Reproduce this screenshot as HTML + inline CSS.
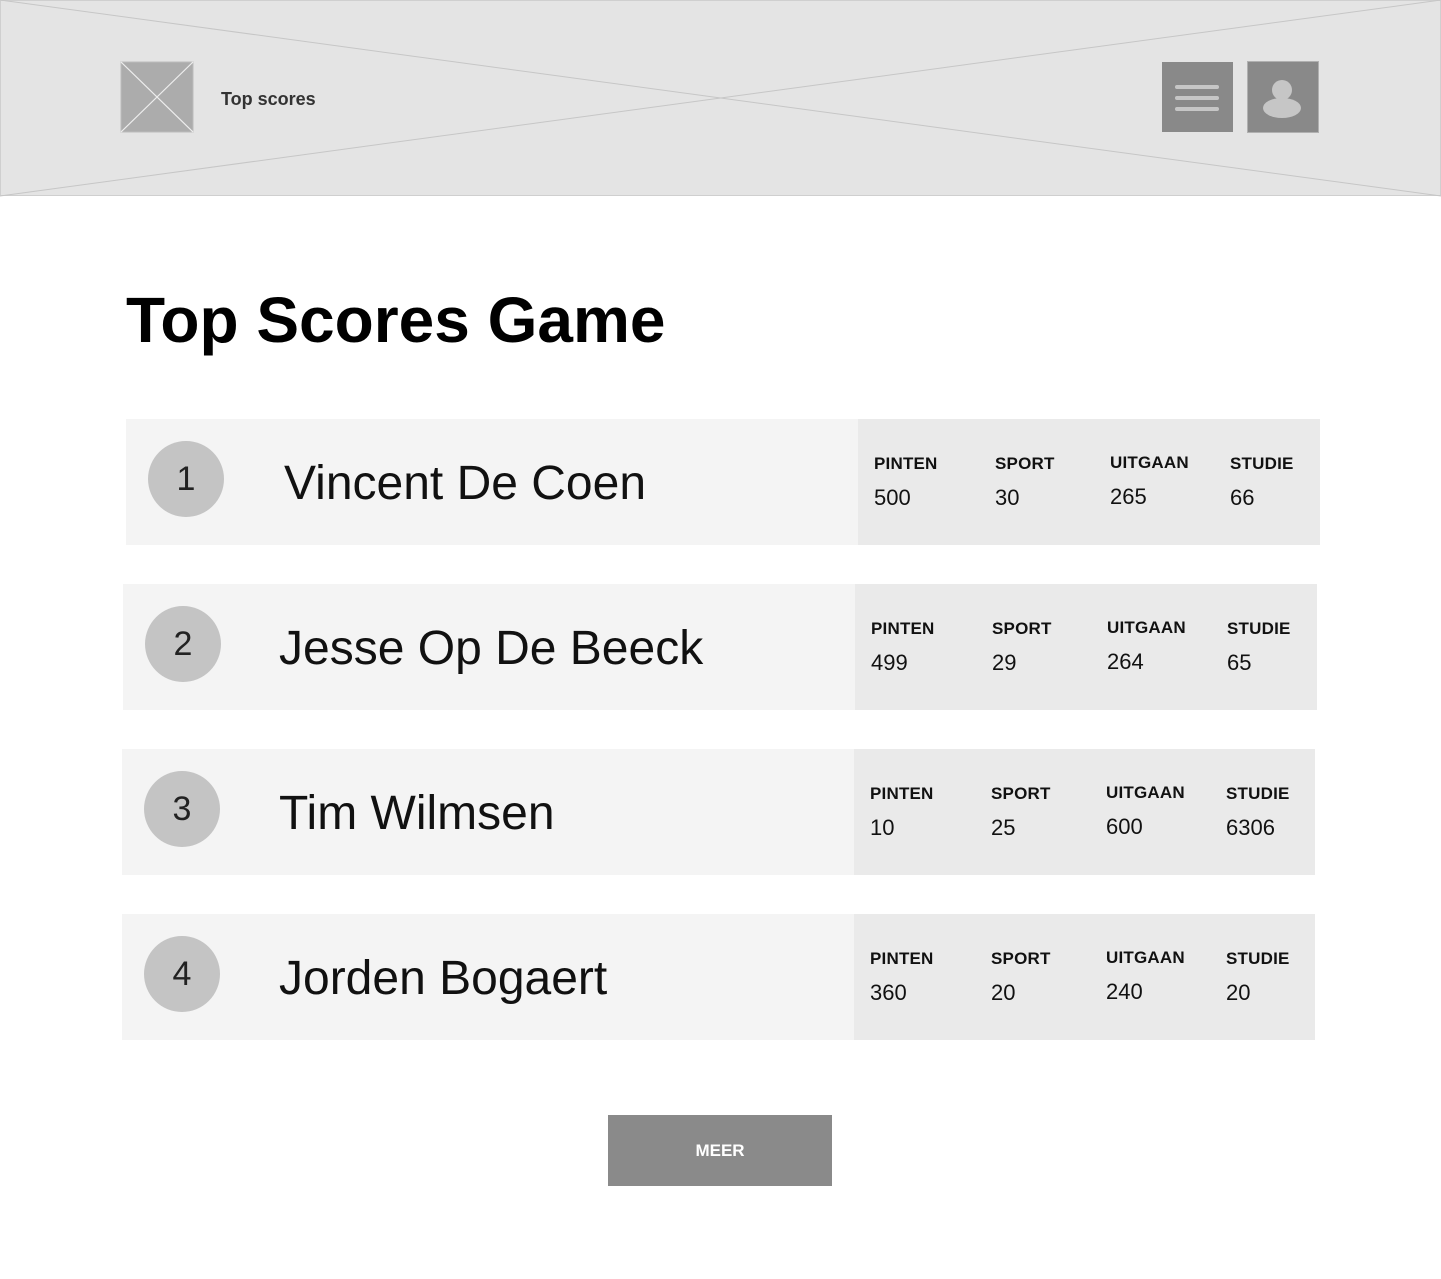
<!DOCTYPE html>
<html><head><meta charset="utf-8"><style>
*{margin:0;padding:0;box-sizing:border-box}
body{width:1441px;height:1279px;background:#fff;position:relative;overflow:hidden;font-family:"Liberation Sans",sans-serif;color:#000}
.a{position:absolute;white-space:nowrap;line-height:1}
.row{position:absolute;height:126px;background:#f4f4f4}
.panel{position:absolute;top:0;bottom:0;right:0;background:#eaeaea}
.circ{position:absolute;width:76px;height:76px;border-radius:50%;background:#c4c4c4;font-size:34px;line-height:76px;text-align:center;left:22px;top:22px;color:#222}
.name{position:absolute;font-size:48px;line-height:1;top:41px;white-space:nowrap;color:#111}
.lab{position:absolute;font-size:17px;font-weight:bold;top:36px;line-height:1;color:#111;letter-spacing:0.2px}
.val{position:absolute;font-size:22px;top:68px;line-height:1;color:#111}
</style></head><body>
<svg class="a" style="left:0;top:0" width="1441" height="197">
<rect x="0.5" y="0.5" width="1440" height="195" fill="#e4e4e4" stroke="#cfcfcf"/>
<line x1="0" y1="0" x2="1441" y2="196" stroke="#c6c6c6" stroke-width="1"/>
<line x1="0" y1="196" x2="1441" y2="0" stroke="#c6c6c6" stroke-width="1"/>
<rect x="121" y="62" width="72" height="70" fill="#acacac" stroke="#bdbdbd"/>
<line x1="121" y1="62" x2="193" y2="132" stroke="#eee" stroke-width="1.2"/>
<line x1="193" y1="62" x2="121" y2="132" stroke="#eee" stroke-width="1.2"/>
<rect x="1162" y="62" width="71" height="70" fill="#898989"/>
<g stroke="#c6c6c6" stroke-width="4" stroke-linecap="round">
<line x1="1177" y1="87" x2="1217" y2="87"/><line x1="1177" y1="98" x2="1217" y2="98"/><line x1="1177" y1="109" x2="1217" y2="109"/></g>
<rect x="1247.5" y="61.5" width="71" height="71" fill="#898989" stroke="#b0b0b0"/>
<circle cx="1282" cy="90" r="10" fill="#c6c6c6"/>
<ellipse cx="1282" cy="108" rx="19" ry="10" fill="#c6c6c6"/>
</svg>
<div class="a" style="left:221px;top:90px;font-size:18px;font-weight:bold;color:#333">Top scores</div>
<div class="a" style="left:126px;top:288px;font-size:64px;font-weight:bold">Top Scores Game</div>

<div class="row" style="left:126px;top:419px;width:1194px">
 <div class="circ">1</div><div class="name" style="left:158px">Vincent De Coen</div>
 <div class="panel" style="left:732px">
  <div class="lab" style="left:16px">PINTEN</div><div class="val" style="left:16px">500</div>
  <div class="lab" style="left:137px">SPORT</div><div class="val" style="left:137px">30</div>
  <div class="lab" style="left:252px;top:35px">UITGAAN</div><div class="val" style="left:252px;top:67px">265</div>
  <div class="lab" style="left:372px">STUDIE</div><div class="val" style="left:372px">66</div>
 </div></div>

<div class="row" style="left:123px;top:584px;width:1194px">
 <div class="circ">2</div><div class="name" style="left:156px">Jesse Op De Beeck</div>
 <div class="panel" style="left:732px">
  <div class="lab" style="left:16px">PINTEN</div><div class="val" style="left:16px">499</div>
  <div class="lab" style="left:137px">SPORT</div><div class="val" style="left:137px">29</div>
  <div class="lab" style="left:252px;top:35px">UITGAAN</div><div class="val" style="left:252px;top:67px">264</div>
  <div class="lab" style="left:372px">STUDIE</div><div class="val" style="left:372px">65</div>
 </div></div>

<div class="row" style="left:122px;top:749px;width:1193px">
 <div class="circ">3</div><div class="name" style="left:157px">Tim Wilmsen</div>
 <div class="panel" style="left:732px">
  <div class="lab" style="left:16px">PINTEN</div><div class="val" style="left:16px">10</div>
  <div class="lab" style="left:137px">SPORT</div><div class="val" style="left:137px">25</div>
  <div class="lab" style="left:252px;top:35px">UITGAAN</div><div class="val" style="left:252px;top:67px">600</div>
  <div class="lab" style="left:372px">STUDIE</div><div class="val" style="left:372px">6306</div>
 </div></div>

<div class="row" style="left:122px;top:914px;width:1193px">
 <div class="circ">4</div><div class="name" style="left:157px">Jorden Bogaert</div>
 <div class="panel" style="left:732px">
  <div class="lab" style="left:16px">PINTEN</div><div class="val" style="left:16px">360</div>
  <div class="lab" style="left:137px">SPORT</div><div class="val" style="left:137px">20</div>
  <div class="lab" style="left:252px;top:35px">UITGAAN</div><div class="val" style="left:252px;top:67px">240</div>
  <div class="lab" style="left:372px">STUDIE</div><div class="val" style="left:372px">20</div>
 </div></div>

<div class="a" style="left:608px;top:1115px;width:224px;height:71px;background:#8a8a8a;color:#fff;font-weight:bold;font-size:17px;line-height:71px;text-align:center">MEER</div>
</body></html>
